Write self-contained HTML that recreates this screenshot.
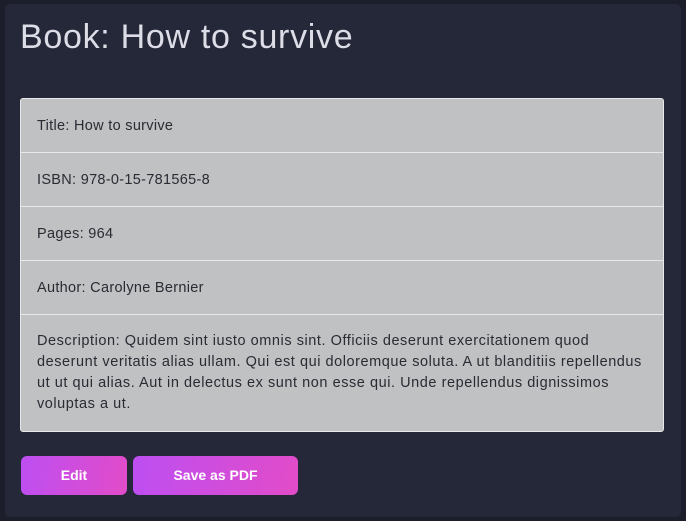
<!DOCTYPE html>
<html><head><style>
html,body{margin:0;padding:0;width:686px;height:521px;background:#1c1e2b;overflow:hidden;font-family:"Liberation Sans",sans-serif;}
.card{position:absolute;left:5px;top:4px;width:676px;height:513px;background:#252839;border-radius:5px;}
h1{position:absolute;left:15px;top:14px;margin:0;font-weight:400;font-size:34px;color:#dcdde6;letter-spacing:0.7px;}
.list{position:absolute;left:15px;top:94px;width:642px;border:1px solid #e8e8ea;border-radius:3px;background:#c0c1c3;}
.row{border-top:1px solid #e8e8ea;padding:0 16px;height:53px;line-height:54px;font-size:14.5px;color:#2a2b33;letter-spacing:0.3px;}
.row:first-child{border-top:none;}
.desc{height:84px;line-height:21px;padding:16px 16px 16px;white-space:nowrap;letter-spacing:0.55px;}
.btn{position:absolute;top:452px;height:39px;border-radius:6px;background:linear-gradient(100deg,#bd4ef2,#e24cc8);color:#fff;font-weight:700;font-size:14px;text-align:center;line-height:39px;}
</style></head><body>
<div class="card">
<h1>Book: How to survive</h1>
<div class="list">
<div class="row">Title: How to survive</div>
<div class="row">ISBN: 978-0-15-781565-8</div>
<div class="row">Pages: 964</div>
<div class="row">Author: Carolyne Bernier</div>
<div class="row desc">Description: Quidem sint iusto omnis sint. Officiis deserunt exercitationem quod<br>deserunt veritatis alias ullam. Qui est qui doloremque soluta. A ut blanditiis repellendus<br>ut ut qui alias. Aut in delectus ex sunt non esse qui. Unde repellendus dignissimos<br>voluptas a ut.</div>
</div>
<div class="btn" style="left:16px;width:106px">Edit</div>
<div class="btn" style="left:128px;width:165px">Save as PDF</div>
</div>
</body></html>
